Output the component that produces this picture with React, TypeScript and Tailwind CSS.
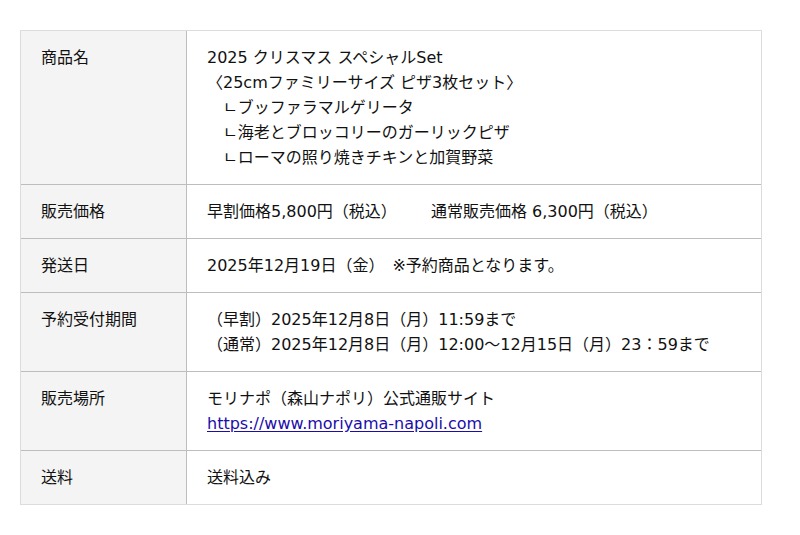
const rows: { label: string; lines: React.ReactNode[] }[] = [
  {
    label: '商品名',
    lines: [
      '2025 クリスマス スペシャルSet',
      '〈25cmファミリーサイズ ピザ3枚セット〉',
      '　ㄴブッファラマルゲリータ',
      '　ㄴ海老とブロッコリーのガーリックピザ',
      '　ㄴローマの照り焼きチキンと加賀野菜',
    ],
  },
  { label: '販売価格', lines: ['早割価格5,800円（税込）　　  通常販売価格 6,300円（税込）'] },
  { label: '発送日', lines: ['2025年12月19日（金）　※予約商品となります。'] },
  {
    label: '予約受付期間',
    lines: ['（早割）2025年12月8日（月）11:59まで', '（通常）2025年12月8日（月）12:00〜12月15日（月）23：59まで'],
  },
  {
    label: '販売場所',
    lines: [
      'モリナポ（森山ナポリ）公式通販サイト',
      <a key="link" href="#" className="text-[#1a0dab] underline underline-offset-2">
        https://www.moriyama-napoli.com
      </a>,
    ],
  },
  { label: '送料', lines: ['送料込み'] },
];

export default function App() {
  return (
    <div
      className="min-h-[535px] w-[800px] bg-white pt-[30px] pl-[20px] text-[16px] leading-[25px] text-[#111]"
      style={{ fontFamily: '"DejaVu Sans", "Noto Sans CJK JP", sans-serif' }}
    >
      <div className="w-[742px] border border-[#dcdcdc]">
        {rows.map((row, i) => (
          <div key={row.label} className={`flex ${i > 0 ? 'border-t border-[#bdbdbd]' : ''}`}>
            <div className="w-[166px] shrink-0 border-r border-[#bdbdbd] bg-[#f4f4f4] px-5 py-[14px]">{row.label}</div>
            <div className="flex-1 px-5 py-[14px] whitespace-pre">
              {row.lines.map((line, j) => (
                <div key={j}>{line}</div>
              ))}
            </div>
          </div>
        ))}
      </div>
    </div>
  );
}
